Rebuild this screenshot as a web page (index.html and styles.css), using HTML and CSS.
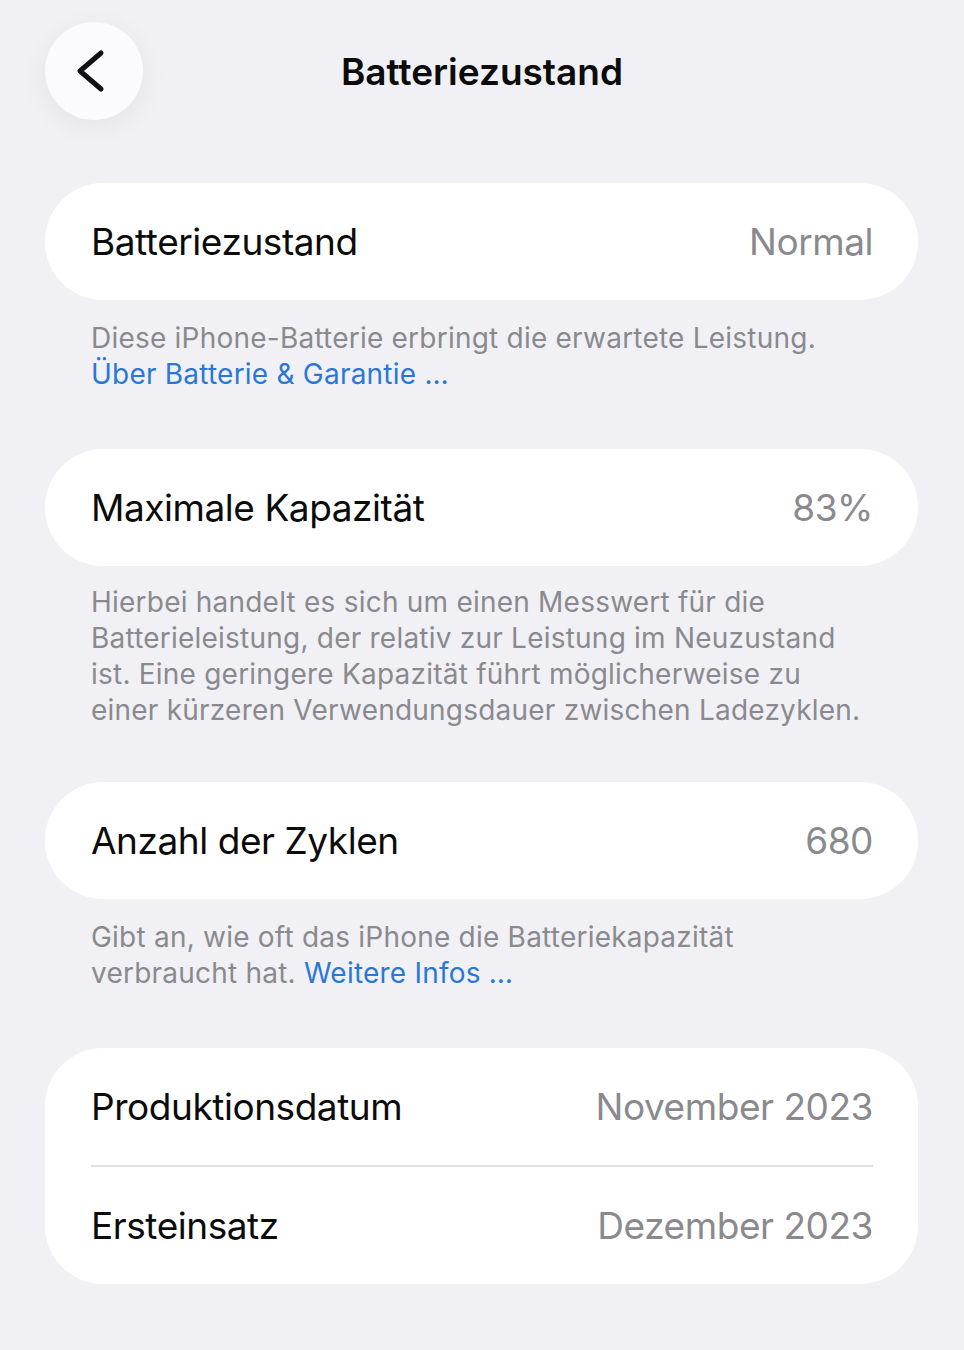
FILE: index.html
```html
<!DOCTYPE html>
<html lang="de">
<head>
<meta charset="utf-8">
<title>Batteriezustand</title>
<link rel="stylesheet" href="styles.css">
</head>
<body>
<div class="screen">
  <header class="nav">
    <button class="back" aria-label="Zurück">
      <svg width="98" height="98" viewBox="0 0 98 98">
        <path d="M56 31 L35 49 L56 67" fill="none" stroke="#111" stroke-width="5" stroke-linecap="round" stroke-linejoin="round"/>
      </svg>
    </button>
    <h1 class="title">Batteriezustand</h1>
  </header>

  <main class="content">
    <section class="group">
      <div class="card">
        <div class="row"><span class="label">Batteriezustand</span><span class="value">Normal</span></div>
      </div>
      <p class="footer">Diese iPhone-Batterie erbringt die erwartete Leistung.<br><a class="link">Über Batterie &amp; Garantie …</a></p>
    </section>

    <section class="group">
      <div class="card">
        <div class="row"><span class="label">Maximale Kapazität</span><span class="value">83%</span></div>
      </div>
      <p class="footer">Hierbei handelt es sich um einen Messwert für die<br>Batterieleistung, der relativ zur Leistung im Neuzustand<br>ist. Eine geringere Kapazität führt möglicherweise zu<br>einer kürzeren Verwendungsdauer zwischen Ladezyklen.</p>
    </section>

    <section class="group">
      <div class="card">
        <div class="row"><span class="label">Anzahl der Zyklen</span><span class="value">680</span></div>
      </div>
      <p class="footer">Gibt an, wie oft das iPhone die Batteriekapazität<br>verbraucht hat. <a class="link">Weitere Infos …</a></p>
    </section>

    <section class="group">
      <div class="card">
        <div class="row"><span class="label">Produktionsdatum</span><span class="value">November 2023</span></div>
        <div class="divider"></div>
        <div class="row"><span class="label">Ersteinsatz</span><span class="value">Dezember 2023</span></div>
      </div>
    </section>
  </main>
</div>
</body>
</html>
```

FILE: styles.css
```css
html, body {
  margin: 0;
  padding: 0;
  background: #f1f0f5;
}

.screen {
  width: 964px;
  min-height: 1350px;
  font-family: Inter, "Noto Sans", "Liberation Sans", sans-serif;
  color: #111;
}

.nav {
  height: 183px;
  position: relative;
  display: flex;
  justify-content: center;
}

.back {
  position: absolute;
  left: 45px;
  top: 22px;
  width: 98px;
  height: 98px;
  border: none;
  padding: 0;
  border-radius: 50%;
  background: #fbfbfd;
  box-shadow: 0 6px 28px rgba(0, 0, 0, 0.06);
  display: flex;
  align-items: center;
  justify-content: center;
}

.title {
  margin: 0;
  margin-top: 49px;
  height: 46px;
  line-height: 46px;
  font-size: 37px;
  font-weight: 600;
  letter-spacing: 0;
  color: #0c0c0c;
}

.content {
  padding: 0 46px 0 45px;
}

.group {
  margin-bottom: 57px;
}

.card {
  background: #ffffff;
  border-radius: 58px;
  padding: 0 45px 0 46px;
}

.row {
  height: 117px;
  display: flex;
  align-items: center;
  justify-content: space-between;
  font-size: 37px;
  letter-spacing: -0.45px;
}

.label {
  color: #0b0b0b;
}

.value {
  color: #8a8a8e;
}

.divider {
  height: 2px;
  background: #e0e0e4;
}

.footer {
  margin: 0;
  padding: 20px 46px 0 46px;
  font-size: 28px;
  line-height: 36px;
  color: #8a8a8e;
  letter-spacing: 0.22px;
}

.group:nth-child(2) .footer {
  padding-top: 18px;
}

.group:nth-child(2) {
  margin-bottom: 54px;
}

.link {
  color: #2a78d6;
}
```
